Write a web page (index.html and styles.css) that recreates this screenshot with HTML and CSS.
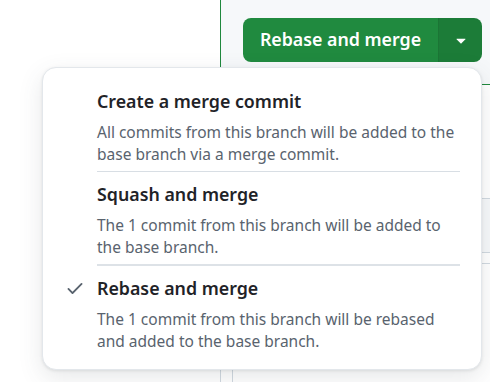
FILE: index.html
```html
<!DOCTYPE html>
<html lang="en">
<head>
<meta charset="utf-8">
<title>Merge options</title>
<link rel="stylesheet" href="styles.css">
</head>
<body>
<div class="page">
  <div class="left"></div>
  <div class="right">
    <div class="merge-bar">
      <div class="btn-group">
        <button class="btn-main">Rebase and merge</button>
        <button class="btn-caret" aria-label="Select merge method">
          <svg width="20" height="20" viewBox="0 0 16 16" fill="#ffffff"><path d="m4.427 7.427 3.396 3.396a.25.25 0 0 0 .354 0l3.396-3.396A.25.25 0 0 0 11.396 7H4.604a.25.25 0 0 0-.177.427Z"/></svg>
        </button>
      </div>
    </div>
    <div class="body">
      <div class="sec-a"></div>
      <div class="sec-b"></div>
      <div class="sec-c"></div>
      <div class="sec-d"><div class="rail"></div></div>
    </div>
  </div>
</div>

<div class="menu" role="menu">
  <div class="item">
    <span class="check"></span>
    <div class="text">
      <div class="title">Create a merge commit</div>
      <div class="desc">All commits from this branch will be added to the base branch via a merge commit.</div>
    </div>
  </div>
  <div class="divider"></div>
  <div class="item">
    <span class="check"></span>
    <div class="text">
      <div class="title">Squash and merge</div>
      <div class="desc">The 1 commit from this branch will be added to the base branch.</div>
    </div>
  </div>
  <div class="divider thick"></div>
  <div class="item">
    <span class="check">
      <svg width="20" height="20" viewBox="0 0 16 16" fill="#59636e"><path d="M13.78 4.22a.75.75 0 0 1 0 1.06l-7.25 7.25a.75.75 0 0 1-1.06 0L2.22 9.28a.751.751 0 0 1 .018-1.042.751.751 0 0 1 1.042-.018L6 10.94l6.72-6.72a.75.75 0 0 1 1.06 0Z"/></svg>
    </span>
    <div class="text">
      <div class="title">Rebase and merge</div>
      <div class="desc">The 1 commit from this branch will be rebased and added to the base branch.</div>
    </div>
  </div>
</div>
</body>
</html>
```

FILE: styles.css
```css
* { box-sizing: border-box; }
html, body {
  margin: 0;
  padding: 0;
  width: 490px;
  height: 382px;
  overflow: hidden;
  background: #ffffff;
  font-family: "Noto Sans", "Open Sans", sans-serif;
}
.page {
  display: flex;
  width: 490px;
  height: 382px;
}
.left {
  width: 220px;
  background: #ffffff;
}
.right {
  flex: 1;
  display: flex;
  flex-direction: column;
}
.merge-bar {
  height: 85px;
  background: #f6f8fa;
  border-left: 1px solid #1f883d;
  border-bottom: 1px solid #1f883d;
  display: flex;
  justify-content: flex-end;
  align-items: flex-start;
  padding: 18px 8px 0 0;
}
.btn-group {
  display: flex;
  height: 44px;
  border-radius: 8px;
  overflow: hidden;
}
.btn-main, .btn-caret {
  border: 0;
  margin: 0;
  color: #ffffff;
  font-family: inherit;
  cursor: pointer;
}
.btn-main {
  width: 195px;
  background: #208a3f;
  font-size: 17.8px;
  font-weight: 600;
  padding: 0 0 2px 0;
}
.btn-caret {
  width: 44px;
  background: #1c7c38;
  display: flex;
  align-items: center;
  justify-content: center;
  padding: 0;
  border-left: 1px solid #1b7535;
}
.body {
  flex: 1;
  display: flex;
  flex-direction: column;
  border-left: 1px solid #d1d9e0;
}
.sec-a { height: 113px; background: #ffffff; }
.sec-b {
  height: 55px;
  background: #f6f8fa;
  border-top: 1px solid #d1d9e0;
  border-bottom: 1px solid #d1d9e0;
}
.sec-c { height: 11px; border-bottom: 1px solid #d1d9e0; }
.sec-d { flex: 1; padding-left: 11px; }
.rail { height: 100%; border-left: 1px solid #d1d9e0; }

.menu {
  position: absolute;
  left: 42px;
  top: 67px;
  width: 440px;
  height: 303px;
  background: #ffffff;
  border: 1px solid #e3e7eb;
  border-radius: 14px;
  box-shadow: 0 8px 24px rgba(66, 74, 83, 0.13), 0 1px 3px rgba(31, 35, 40, 0.10);
  padding: 11px 21px 13px 0;
}
.item {
  display: flex;
  padding: 10px 0 6px 0;
}
.check {
  width: 54px;
  flex: none;
  display: flex;
  justify-content: flex-start;
  padding: 2px 0 0 22px;
}
.text { flex: 1; }
.title {
  font-size: 17.8px;
  line-height: 24px;
  font-weight: 600;
  color: #1f2328;
}
.desc {
  margin-top: 8px;
  font-size: 15.5px;
  line-height: 22px;
  color: #59636e;
}
.divider {
  height: 1px;
  margin-left: 54px;
  background: #d8dee4;
}
.divider.thick {
  height: 2px;
  background: #dde2e7;
}
```
